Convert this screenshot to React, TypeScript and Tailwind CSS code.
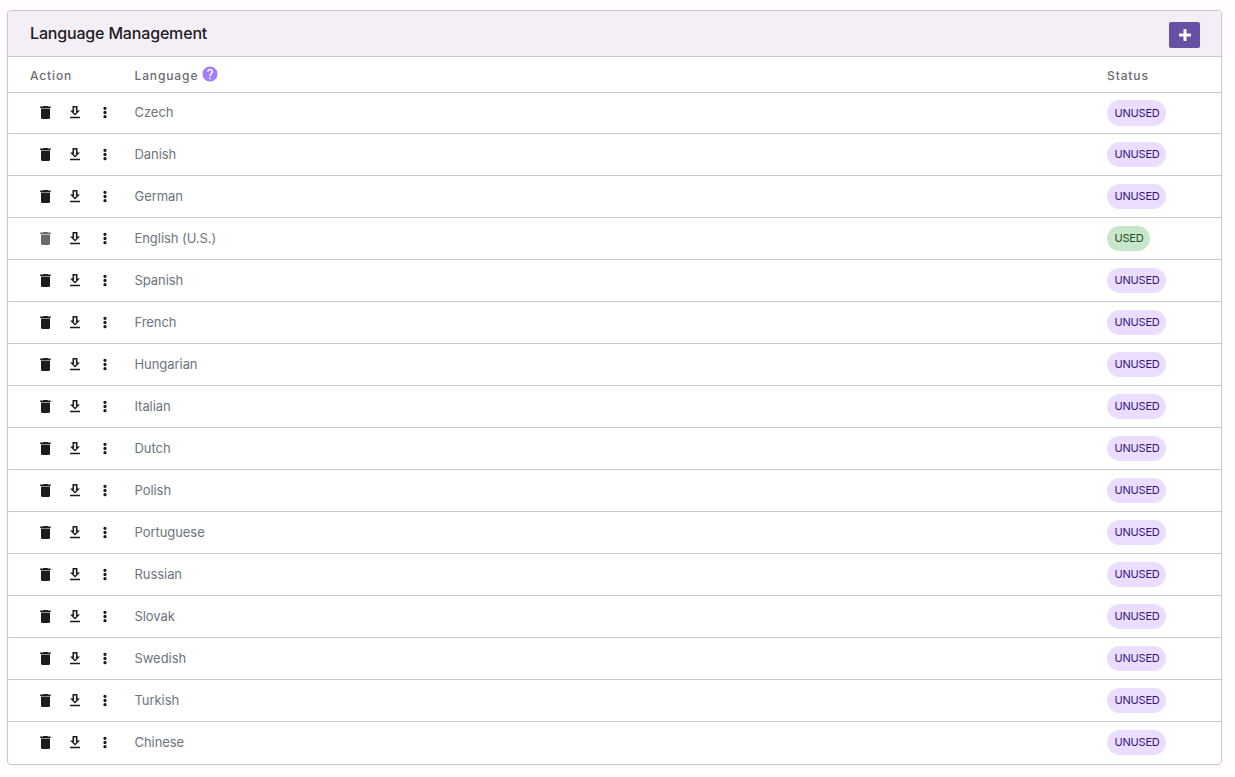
import type { ReactNode } from "react";

type Language = { name: string; used?: boolean };

const languages: Language[] = [
  { name: "Czech" },
  { name: "Danish" },
  { name: "German" },
  { name: "English (U.S.)", used: true },
  { name: "Spanish" },
  { name: "French" },
  { name: "Hungarian" },
  { name: "Italian" },
  { name: "Dutch" },
  { name: "Polish" },
  { name: "Portuguese" },
  { name: "Russian" },
  { name: "Slovak" },
  { name: "Swedish" },
  { name: "Turkish" },
  { name: "Chinese" },
];

function Icon({ d }: { d: string }) {
  return (
    <svg viewBox="0 0 18 18" fill="currentColor" fillRule="evenodd" className="size-[18px] shrink-0">
      <path d={d} />
    </svg>
  );
}

const icons = {
  trash: "M7 3h4.800v.6h2.900v1.400H4.100V3.600H7zM5 5.500h9v9q0 1.500-1.500 1.500h-6Q5 16 5 14.500z",
  download: "M14 7.500h-2.500V3H6.500v4.500H4L9 12.500zM8.100 4.500h1.800v4.500h.7L9 10.400 7.400 9h.7zM4 13.700h10v1.500H4z",
  more: "M9 3.700a1.650 1.650 0 1 1 0 3.300a1.650 1.650 0 1 1 0-3.300zM9 7.850a1.650 1.650 0 1 1 0 3.300a1.650 1.650 0 1 1 0-3.300zM9 12a1.650 1.650 0 1 1 0 3.300a1.650 1.650 0 1 1 0-3.300z",
};

function HelpIcon() {
  return (
    <svg viewBox="0 0 24 24" fill="currentColor" className="-mt-1 size-[18px] shrink-0 text-[#a37dff]">
      <path d="M12 2C6.48 2 2 6.48 2 12s4.48 10 10 10 10-4.48 10-10S17.52 2 12 2zm1 17h-2v-2h2v2zm2.07-7.75l-.9.92C13.45 12.9 13 13.5 13 15h-2v-.5c0-1.1.45-2.1 1.17-2.83l1.24-1.26c.37-.36.59-.86.59-1.41 0-1.1-.9-2-2-2s-2 .9-2 2H8c0-2.21 1.79-4 4-4s4 1.79 4 4c0 .88-.36 1.68-.93 2.25z" />
    </svg>
  );
}

function IconButton({ label, disabled, children }: { label: string; disabled?: boolean; children: ReactNode }) {
  return (
    <button aria-label={label} disabled={disabled} className="flex w-[30px] justify-center disabled:opacity-65">
      {children}
    </button>
  );
}

function StatusBadge({ used }: { used?: boolean }) {
  return (
    <span
      className={`flex h-[25px] items-center rounded-full text-[11px] leading-none tracking-[-0.2px] group-first:h-[26px] ${
        used ? "w-[43px] bg-[#c8e6c9] pl-[7.5px] text-[#1b4d20]" : "w-[59px] bg-[#eaddff] pl-[7.5px] text-[#33127a]"
      }`}
    >
      {used ? "USED" : "UNUSED"}
    </span>
  );
}

function LanguageRow({ name, used }: Language) {
  return (
    <div className="group grid h-[42px] grid-cols-[104.5px_1fr_114px] items-center border-b border-[#c8c5cb] pl-[22px] first:h-[41px] last:border-b-0 last:pb-px">
      <div className="-mt-px flex text-[#1c1b1f] group-first:-mt-0.5">
        <IconButton label="Delete" disabled={used}>
          <Icon d={icons.trash} />
        </IconButton>
        <IconButton label="Download">
          <Icon d={icons.download} />
        </IconButton>
        <IconButton label="More">
          <Icon d={icons.more} />
        </IconButton>
      </div>
      <div className="-mt-0.5 text-[13px] leading-5 tracking-[-0.06px] text-[#6c757d]">{name}</div>
      <StatusBadge used={used} />
    </div>
  );
}

export default function App() {
  return (
    <main className="h-[777px] bg-[#fffbff] pt-2.5 pr-[13px] pl-[7px] font-['Inter',sans-serif]">
      <section className="h-[755px] overflow-hidden rounded border border-[#c8c5cb] bg-white">
        <header className="flex h-[46px] items-center justify-between border-b border-[#c8c5cb] bg-[#f4eff7] pr-[21px] pl-[22px]">
          <h1 className="-mt-0.5 text-base font-medium tracking-[-0.17px] text-[#1c1b1f]">Language Management</h1>
          <button
            aria-label="Add language"
            className="mt-[3px] flex h-[26px] w-[31px] items-center justify-center rounded-[2px] bg-[#6750a4] text-white"
          >
            <svg viewBox="0 0 12 12" fill="currentColor" className="-mt-px size-3">
              <path d="M5 0h2q.5 0 .5.5v4h4q.5 0 .5.5v2q0 .5-.5.5h-4v4q0 .5-.5.5H5q-.5 0-.5-.5v-4h-4Q0 7.500 0 7V5q0-.5.5-.5h4v-4Q4.500 0 5 0z" />
            </svg>
          </button>
        </header>
        <div className="grid h-9 grid-cols-[104.5px_1fr_114px] items-center border-b border-[#c8c5cb] pt-0.5 pl-[22px] text-[12px] font-medium tracking-[0.88px] text-[#6c6b70]">
          <div>Action</div>
          <div className="flex items-center gap-[3px]">
            Language
            <HelpIcon />
          </div>
          <div>Status</div>
        </div>
        <div>
          {languages.map((language) => (
            <LanguageRow key={language.name} {...language} />
          ))}
        </div>
      </section>
    </main>
  );
}
